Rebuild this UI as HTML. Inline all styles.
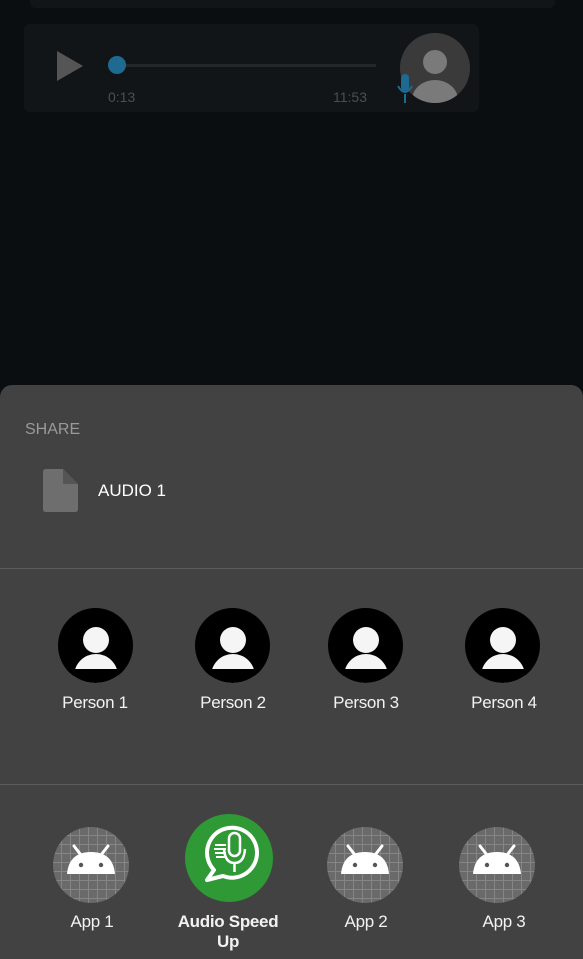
<!DOCTYPE html>
<html><head><meta charset="utf-8"><style>
*{margin:0;padding:0;box-sizing:border-box}
body{width:583px;height:959px;background:#0a0e11;position:relative;overflow:hidden;font-family:"Liberation Sans",sans-serif}
.abs{position:absolute}
.sheet{left:0;top:385px;width:583px;height:574px;background:#424242;border-radius:12px 12px 0 0}
.div{left:0;width:583px;height:1px;background:#5c5c5c}
.lbl{color:#f2f2f2;font-size:17px;text-align:center;width:120px;letter-spacing:-0.3px}
.pc{width:75px;height:75px;border-radius:50%;background:#000;overflow:hidden}
</style></head><body>
<div class="abs" style="left:30px;top:0;width:525px;height:8px;background:#121517;border-radius:0 0 6px 6px"></div>
<div class="abs" style="left:24px;top:24px;width:455px;height:88px;background:#121517;border-radius:6px"></div>
<svg class="abs" style="left:55px;top:50px" width="30" height="32"><polygon points="2,1 28,16 2,31" fill="#555"/></svg>
<div class="abs" style="left:110px;top:64px;width:266px;height:3px;background:#22272a"></div>
<div class="abs" style="left:108px;top:56px;width:18px;height:18px;border-radius:50%;background:#1e6a91"></div>
<div class="abs" style="left:108px;top:89px;color:#4a4f52;font-size:14px">0:13</div>
<div class="abs" style="left:333px;top:89px;color:#4a4f52;font-size:14px">11:53</div>
<div class="abs" style="left:400px;top:33px;width:70px;height:70px;border-radius:50%;background:#3a3a3a;overflow:hidden">
<div class="abs" style="left:23px;top:17px;width:24px;height:24px;border-radius:50%;background:#7a7a7a"></div>
<div class="abs" style="left:12px;top:47px;width:46px;height:40px;border-radius:50%;background:#7a7a7a"></div></div>
<svg class="abs" style="left:396px;top:74px" width="18" height="30"><rect x="5" y="0" width="8" height="17" rx="4" fill="#1e6a91"/><path d="M2 12 Q9 24 16 12" stroke="#1e6a91" stroke-width="2" fill="none"/><rect x="8" y="20" width="2" height="9" fill="#1e6a91"/></svg>

<div class="abs sheet"></div>
<div class="abs" style="left:25px;top:421px;color:#9a9a9a;font-size:16px">SHARE</div>
<svg class="abs" style="left:43px;top:469px" width="35" height="43"><path d="M3 0 H20 L35 15 V40 Q35 43 32 43 H3 Q0 43 0 40 V3 Q0 0 3 0Z" fill="#6e6e6e"/><path d="M20 0 V15 H35Z" fill="#555"/></svg>
<div class="abs" style="left:98px;top:481px;color:#fff;font-size:17px">AUDIO 1</div>
<div class="abs div" style="top:568px"></div>

<div class="abs pc" style="left:58px;top:608px"><div class="abs" style="left:25px;top:19px;width:26px;height:26px;border-radius:50%;background:#f5f5f5;box-shadow:0 0 0 1.5px #000"></div><div class="abs" style="left:16px;top:46px;width:44px;height:40px;border-radius:22px 22px 0 0;background:#f5f5f5"></div><div class="abs" style="left:0;top:61px;width:75px;height:20px;background:#000"></div></div>
<div class="abs pc" style="left:195px;top:608px"><div class="abs" style="left:25px;top:19px;width:26px;height:26px;border-radius:50%;background:#f5f5f5"></div><div class="abs" style="left:16px;top:46px;width:44px;height:40px;border-radius:22px 22px 0 0;background:#f5f5f5"></div><div class="abs" style="left:0;top:61px;width:75px;height:20px;background:#000"></div></div>
<div class="abs pc" style="left:328px;top:608px"><div class="abs" style="left:25px;top:19px;width:26px;height:26px;border-radius:50%;background:#f5f5f5"></div><div class="abs" style="left:16px;top:46px;width:44px;height:40px;border-radius:22px 22px 0 0;background:#f5f5f5"></div><div class="abs" style="left:0;top:61px;width:75px;height:20px;background:#000"></div></div>
<div class="abs pc" style="left:465px;top:608px"><div class="abs" style="left:25px;top:19px;width:26px;height:26px;border-radius:50%;background:#f5f5f5"></div><div class="abs" style="left:16px;top:46px;width:44px;height:40px;border-radius:22px 22px 0 0;background:#f5f5f5"></div><div class="abs" style="left:0;top:61px;width:75px;height:20px;background:#000"></div></div>
<div class="abs lbl" style="left:35px;top:693px">Person 1</div>
<div class="abs lbl" style="left:173px;top:693px">Person 2</div>
<div class="abs lbl" style="left:306px;top:693px">Person 3</div>
<div class="abs lbl" style="left:444px;top:693px">Person 4</div>
<div class="abs div" style="top:784px"></div>

<svg width="0" height="0" style="position:absolute"><defs>
<pattern id="g" width="9" height="9" patternUnits="userSpaceOnUse"><rect width="9" height="9" fill="#6a6a6a"/><path d="M0 0.5H9M0.5 0V9" stroke="#858585" stroke-width="1"/></pattern>
<symbol id="and" viewBox="0 0 78 78"><circle cx="39" cy="39" r="38" fill="url(#g)"/><path d="M22 20 L29 29 M56 20 L49 29" stroke="#fff" stroke-width="3" stroke-linecap="round"/><path d="M15 48 Q17 26 39 26 Q61 26 63 48Z" fill="#fff"/><circle cx="29" cy="39" r="2.2" fill="#555"/><circle cx="49" cy="39" r="2.2" fill="#555"/></symbol>
</defs></svg>
<svg class="abs" style="left:52px;top:826px" width="78" height="78"><use href="#and"/></svg>
<svg class="abs" style="left:326px;top:826px" width="78" height="78"><use href="#and"/></svg>
<svg class="abs" style="left:458px;top:826px" width="78" height="78"><use href="#and"/></svg>
<svg class="abs" style="left:184px;top:813px" width="90" height="90"><circle cx="45" cy="45" r="44" fill="#2f9a35"/>
<path d="M30 57 A25 25 0 1 1 39 63 L23 67 Z" fill="none" stroke="#fff" stroke-width="4" stroke-linejoin="round"/>
<rect x="45" y="20" width="11" height="23" rx="5.5" fill="none" stroke="#fff" stroke-width="2.5"/>
<path d="M40 36 Q41 50 50.5 50 Q60 50 61 36 M50.5 50 V59" fill="none" stroke="#fff" stroke-width="2.5"/>
<path d="M31 32H42M30 36H42M31 40H42M32 44H42" stroke="#fff" stroke-width="2"/></svg>
<div class="abs lbl" style="left:32px;top:912px">App 1</div>
<div class="abs lbl" style="left:168px;top:912px;font-weight:bold;line-height:20px">Audio Speed Up</div>
<div class="abs lbl" style="left:306px;top:912px">App 2</div>
<div class="abs lbl" style="left:444px;top:912px">App 3</div>
</body></html>
